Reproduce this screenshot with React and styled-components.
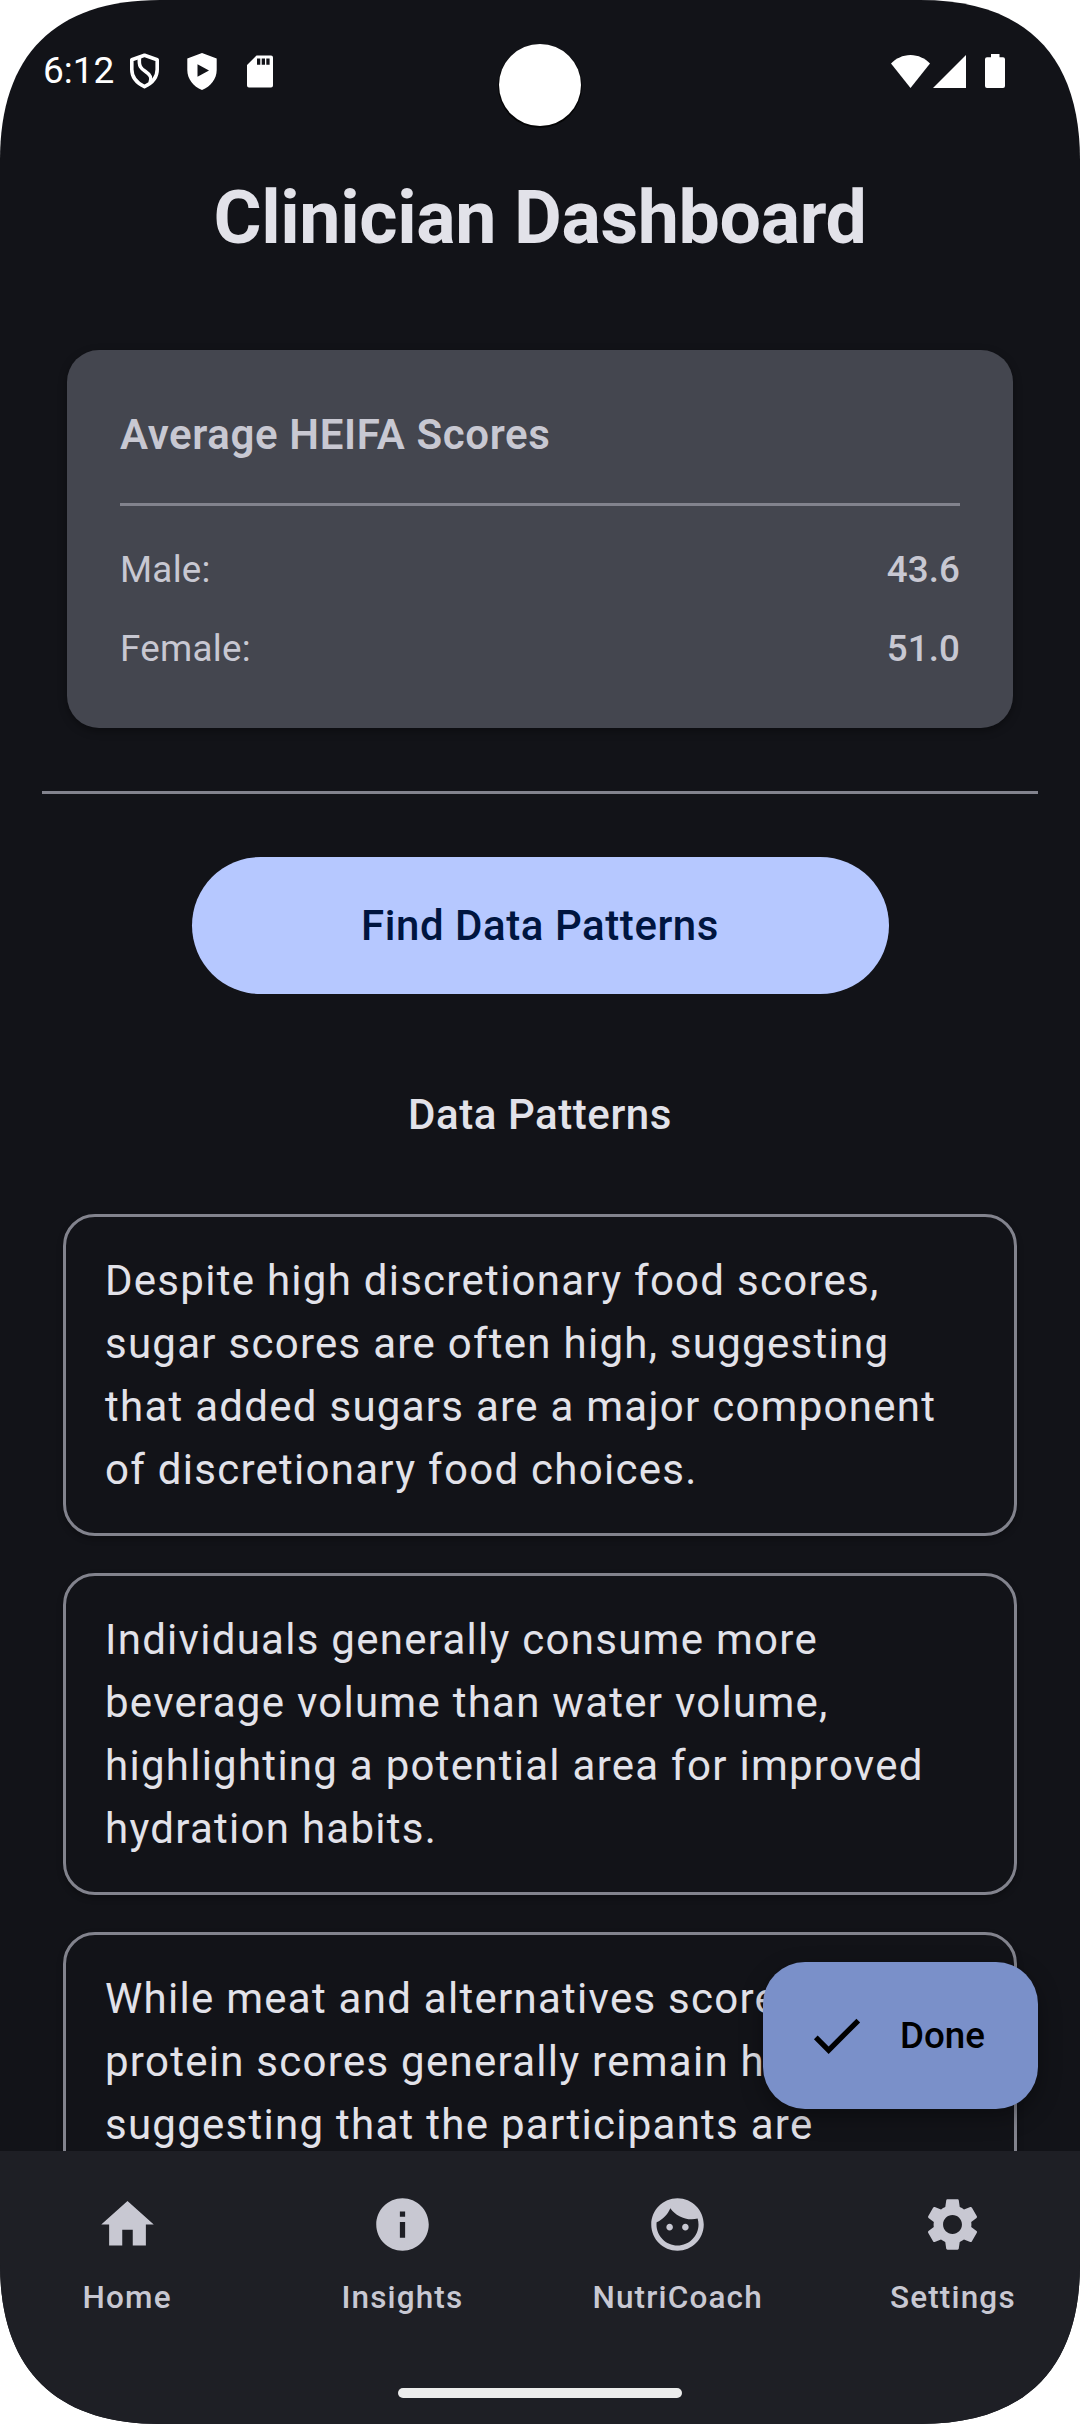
import React from "react";
import styled, { createGlobalStyle } from "styled-components";

const Global = createGlobalStyle`
  * { box-sizing: border-box; }
  html, body { margin: 0; padding: 0; background: #fff; }
  body {
    font-family: Roboto, "Noto Sans", sans-serif;
    -webkit-font-smoothing: antialiased;
  }
  h1, h2, p { margin: 0; }
  button { border: 0; font-family: inherit; margin: 0; }
`;

const Phone = styled.div`
  position: relative;
  width: 1080px;
  height: 2424px;
  display: flex;
  flex-direction: column;
  overflow: hidden;
  background: #121318;
  color: #e2e2e9;
  clip-path: path("M0 160C0 55 55 0 160 0H920C1025 0 1080 55 1080 160V2264C1080 2369 1025 2424 920 2424H160C55 2424 0 2369 0 2264Z");
`;

const StatusBar = styled.header`
  height: 142px;
  flex: none;
  display: flex;
  justify-content: space-between;
  padding: 48px 75px 0 43px;
  color: #fff;
`;

const StatusGroup = styled.div`
  display: flex;
  align-items: center;
  height: 46px;
`;

const Clock = styled.span`
  font-size: 37px;
  line-height: 46px;
  width: 86px;
`;

const Glyph = styled.svg`
  display: block;
  flex: none;
  margin-left: ${(p) => p.$gap || 0}px;
`;

const Camera = styled.div`
  position: absolute;
  left: 499px;
  top: 44px;
  width: 82px;
  height: 82px;
  border-radius: 50%;
  background: #fff;
  box-shadow: 0 1px 0 1px #050506;
`;

const Content = styled.main`
  flex: 1;
  min-height: 0;
  overflow: hidden;
  display: flex;
  flex-direction: column;
  padding: 29px 42px 0;
`;

const Title = styled.h1`
  font-size: 73.5px;
  line-height: 94px;
  font-weight: 700;
  letter-spacing: -0.36px;
  text-align: center;
  flex: none;
`;

const ScoreCard = styled.section`
  flex: none;
  height: 378px;
  margin: 85px 25px 0;
  padding: 53px;
  border-radius: 32px;
  background: #44464f;
  color: #c8c8d2;
  box-shadow: 0 3px 8px rgba(0, 0, 0, 0.35);
`;

const CardTitle = styled.h2`
  font-size: 42px;
  line-height: 63px;
  font-weight: 600;
  letter-spacing: 0.63px;
`;

const Divider = styled.div`
  flex: none;
  height: 3px;
  background: #82838d;
  margin: ${(p) => p.$margin};
`;

const ScoreRow = styled.div`
  display: flex;
  justify-content: space-between;
  font-size: 36.75px;
  line-height: 53px;
  margin-bottom: 26px;
  letter-spacing: 0.28px;
`;

const ScoreValue = styled.span`
  font-weight: 500;
  letter-spacing: 0.1px;
`;

const FindButton = styled.button`
  flex: none;
  align-self: center;
  width: 697px;
  height: 137px;
  margin-top: 63px;
  padding: 0;
  border-radius: 69px;
  background: #b6c8ff;
  color: #00153f;
  font-size: 42px;
  line-height: 63px;
  font-weight: 500;
  letter-spacing: 0.55px;
`;

const SectionTitle = styled.h2`
  flex: none;
  margin-top: 89px;
  font-size: 42px;
  line-height: 63px;
  font-weight: 500;
  letter-spacing: 0.55px;
  text-align: center;
`;

const PatternList = styled.div`
  display: flex;
  flex-direction: column;
  gap: 37px;
  margin: 68px 21px 0;
`;

const PatternCard = styled.p`
  flex: none;
  height: 322px;
  padding: 32px 39px;
  border: 3px solid #82838d;
  border-radius: 32px;
  font-size: 42px;
  line-height: 63px;
  letter-spacing: 1.27px;
  white-space: pre-line;
  box-shadow: 0 3px 6px rgba(0, 0, 0, 0.3);
`;

const DoneButton = styled.button`
  position: absolute;
  left: 763px;
  top: 1962px;
  width: 275px;
  height: 147px;
  display: flex;
  align-items: center;
  gap: 32px;
  padding: 0 0 0 42px;
  border-radius: 42px;
  background: #7a90c9;
  color: #000;
  font-size: 36.75px;
  font-weight: 500;
  box-shadow: 0 8px 22px rgba(0, 0, 0, 0.35);
`;

const NavBar = styled.nav`
  flex: none;
  height: 273px;
  display: flex;
  flex-direction: column;
  align-items: center;
  background: #1e1f25;
  color: #c8c8d2;
`;

const NavItems = styled.div`
  width: 100%;
  height: 237px;
  display: flex;
  gap: 21px;
`;

const NavItem = styled.div`
  flex: 1;
  display: flex;
  flex-direction: column;
  align-items: center;
  padding-top: 42px;
`;

const NavLabel = styled.span`
  margin-top: 21px;
  font-size: 31.5px;
  line-height: 42px;
  font-weight: 500;
  letter-spacing: 1.15px;
`;

const HomeHandle = styled.div`
  width: 284px;
  height: 10px;
  border-radius: 5px;
  background: #ececec;
`;

const patterns = [
  "Despite high discretionary food scores,\nsugar scores are often high, suggesting\nthat added sugars are a major component\nof discretionary food choices.",
  "Individuals generally consume more\nbeverage volume than water volume,\nhighlighting a potential area for improved\nhydration habits.",
  "While meat and alternatives scores vary,\nprotein scores generally remain high,\nsuggesting that the participants are",
];

const navItems = [
  { label: "Home", path: "M10 20v-6h4v6h5v-8h3L12 3 2 12h3v8z" },
  {
    label: "Insights",
    path: "M12 2C6.48 2 2 6.48 2 12s4.48 10 10 10 10-4.48 10-10S17.52 2 12 2zm1 15h-2v-6h2v6zm0-8h-2V7h2v2z",
  },
  {
    label: "NutriCoach",
    path: "M9 11.75c-.69 0-1.25.56-1.25 1.25s.56 1.25 1.25 1.25 1.25-.56 1.25-1.25-.56-1.25-1.25-1.25zm6 0c-.69 0-1.25.56-1.25 1.25s.56 1.25 1.25 1.25 1.25-.56 1.25-1.25-.56-1.25-1.25-1.25zM12 2C6.48 2 2 6.48 2 12s4.48 10 10 10 10-4.48 10-10S17.52 2 12 2zm0 18c-4.41 0-8-3.59-8-8 0-.29.02-.58.05-.86 2.36-1.05 4.23-2.98 5.21-5.37C11.07 8.33 14.05 10 17.42 10c.78 0 1.53-.09 2.25-.26.21.71.33 1.47.33 2.26 0 4.41-3.59 8-8 8z",
  },
  {
    label: "Settings",
    path: "M19.14 12.94c.04-.3.06-.61.06-.94 0-.32-.02-.64-.07-.94l2.03-1.58c.18-.14.23-.41.12-.61l-1.92-3.32c-.12-.22-.37-.29-.59-.22l-2.39.96c-.5-.38-1.03-.7-1.62-.94l-.36-2.54c-.04-.24-.24-.41-.48-.41h-3.84c-.24 0-.43.17-.47.41l-.36 2.54c-.59.24-1.13.57-1.62.94l-2.39-.96c-.22-.08-.47 0-.59.22L2.74 8.87c-.12.21-.08.47.12.61l2.03 1.58c-.05.3-.09.63-.09.94s.02.64.07.94l-2.03 1.58c-.18.14-.23.41-.12.61l1.92 3.32c.12.22.37.29.59.22l2.39-.96c.5.38 1.03.7 1.62.94l.36 2.54c.05.24.24.41.48.41h3.84c.24 0 .44-.17.47-.41l.36-2.54c.59-.24 1.13-.56 1.62-.94l2.39.96c.22.08.47 0 .59-.22l1.92-3.32c.12-.22.07-.47-.12-.61l-2.01-1.58zM12 15.6c-1.98 0-3.6-1.62-3.6-3.6s1.62-3.6 3.6-3.6 3.6 1.62 3.6 3.6-1.62 3.6-3.6 3.6z",
  },
];

function Icon({ path }) {
  return (
    <Glyph width="63" height="63" viewBox="0 0 24 24" fill="currentColor">
      <path d={path} />
    </Glyph>
  );
}

export default function App() {
  return (
    <>
      <Global />
      <Phone>
        <StatusBar>
          <StatusGroup>
            <Clock>6:12</Clock>
            <Glyph width="31" height="36" viewBox="0 0 31 36" fill="none" stroke="#fff" strokeWidth="3.6" strokeLinejoin="round">
              <path d="M15.500 2.200 28.200 6.700V16.500c0 7.500-5 13.500-12.700 17.200C7.800 30 2.800 24 2.800 16.500V6.700z" />
              <path d="M10.500 4.500c-1 9 1.500 11 6 14 4.500 3 7 6 4.500 11.500" />
            </Glyph>
            <Glyph $gap={27} width="30" height="37" viewBox="0 0 30 37" fill="#fff">
              <path fillRule="evenodd" d="M15 0 29.700 5.500V17c0 9-6 16.500-14.700 20C6.300 33.500.3 26 .3 17V5.500zM10.500 11.200v12.500l11.500-6.250z" />
            </Glyph>
            <Glyph $gap={30} width="26" height="33" viewBox="0 0 26 33" fill="#fff">
              <path fillRule="evenodd" d="M9.500 .5H24a2 2 0 0 1 2 2V30.500a2 2 0 0 1-2 2H2a2 2 0 0 1-2-2V10zM10 3.500v6.300h3.300V3.500zM14.700 3.500v6.300h3.300V3.500zM19.300 3.500v6.300h3.300V3.500z" />
            </Glyph>
          </StatusGroup>
          <StatusGroup>
            <Glyph width="39" height="33" viewBox="0 0 40 33" preserveAspectRatio="none" fill="#fff">
              <path d="M0 8.500C5 3.500 12 0 20 0s15 3.500 20 8.500L20 33z" />
            </Glyph>
            <Glyph $gap={3} width="33" height="33" viewBox="0 0 33 33" fill="#fff">
              <path d="M0 33 33 0v33z" />
            </Glyph>
            <Glyph $gap={19} width="20" height="34" viewBox="0 0 20 34" fill="#fff">
              <path d="M6 0h8.500v3.300H18a2 2 0 0 1 2 2V32a2 2 0 0 1-2 2H2a2 2 0 0 1-2-2V5.300a2 2 0 0 1 2-2h4z" />
            </Glyph>
          </StatusGroup>
        </StatusBar>
        <Camera />

        <Content>
          <Title>Clinician Dashboard</Title>
          <ScoreCard>
            <CardTitle>Average HEIFA Scores</CardTitle>
            <Divider $margin="37px 0 37px" />
            <ScoreRow>
              <span>Male:</span>
              <ScoreValue>43.6</ScoreValue>
            </ScoreRow>
            <ScoreRow>
              <span>Female:</span>
              <ScoreValue>51.0</ScoreValue>
            </ScoreRow>
          </ScoreCard>
          <Divider $margin="63px 0 0" />
          <FindButton>Find Data Patterns</FindButton>
          <SectionTitle>Data Patterns</SectionTitle>
          <PatternList>
            {patterns.map((text) => (
              <PatternCard key={text}>{text}</PatternCard>
            ))}
          </PatternList>
        </Content>

        <DoneButton>
          <Icon path="M9 16.170 4.830 12l-1.420 1.410L9 19 21 7l-1.410-1.410z" />
          Done
        </DoneButton>

        <NavBar>
          <NavItems>
            {navItems.map((item) => (
              <NavItem key={item.label}>
                <Icon path={item.path} />
                <NavLabel>{item.label}</NavLabel>
              </NavItem>
            ))}
          </NavItems>
          <HomeHandle />
        </NavBar>
      </Phone>
    </>
  );
}
